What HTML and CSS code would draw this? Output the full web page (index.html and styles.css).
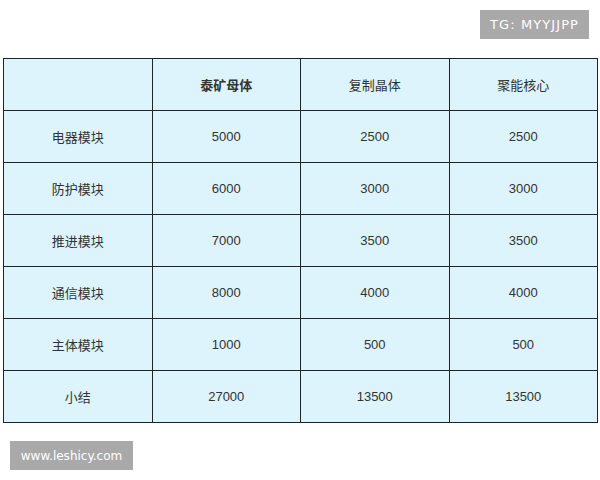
FILE: index.html
```html
<!DOCTYPE html>
<html>
<head>
<meta charset="utf-8">
<link rel="stylesheet" href="styles.css">
</head>
<body>
<div class="page">
  <div class="top">
    <span class="tag tag-tg">TG: MYYJJPP</span>
  </div>
  <table class="grid">
    <tr><td></td><td class="strong">泰矿母体</td><td>复制晶体</td><td>聚能核心</td></tr>
    <tr><td>电器模块</td><td>5000</td><td>2500</td><td>2500</td></tr>
    <tr><td>防护模块</td><td>6000</td><td>3000</td><td>3000</td></tr>
    <tr><td>推进模块</td><td>7000</td><td>3500</td><td>3500</td></tr>
    <tr><td>通信模块</td><td>8000</td><td>4000</td><td>4000</td></tr>
    <tr><td>主体模块</td><td>1000</td><td>500</td><td>500</td></tr>
    <tr><td>小结</td><td>27000</td><td>13500</td><td>13500</td></tr>
  </table>
  <div class="bottom">
    <span class="tag tag-site">www.leshicy.com</span>
  </div>
</div>
</body>
</html>
```
FILE: styles.css
```css
html, body {
  margin: 0;
  padding: 0;
  background: #ffffff;
}
.page {
  width: 600px;
  height: 480px;
  display: flex;
  flex-direction: column;
  padding-top: 10px;
  box-sizing: border-box;
}
.top {
  display: flex;
  justify-content: flex-end;
  padding-right: 11px;
}
.tag {
  display: inline-flex;
  align-items: center;
  justify-content: center;
  height: 29px;
  background: #a9a9a9;
  color: #ffffff;
  font-family: "DejaVu Sans", sans-serif;
  font-size: 12px;
}
.tag-tg {
  width: 109px;
  font-size: 13px;
  letter-spacing: 1.1px;
}
.tag-site {
  width: 123px;
}
.grid {
  margin: 19px 0 0 3px;
  width: 595px;
  border-collapse: collapse;
  table-layout: fixed;
  background: #def4fc;
}
.grid td {
  border: 1px solid #1e2428;
  height: 51px;
  padding: 0;
  text-align: center;
  vertical-align: middle;
  color: #333333;
  font-family: "Liberation Sans", "Noto Sans CJK SC", sans-serif;
  font-size: 13px;
}
.grid td.strong {
  font-weight: bold;
}
.bottom {
  display: flex;
  padding: 18px 0 0 10px;
}
```
